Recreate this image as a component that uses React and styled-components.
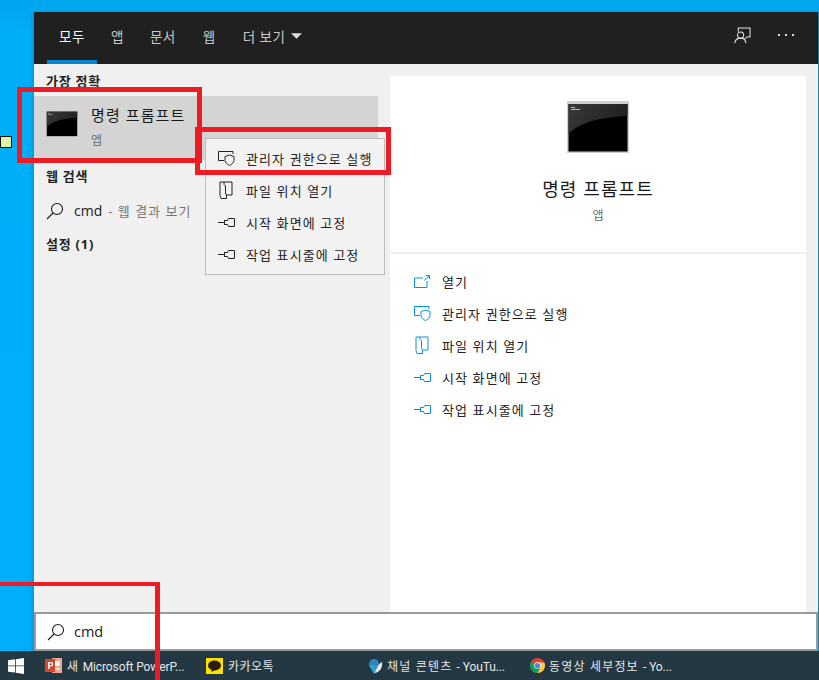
import React from "react";
import styled, { createGlobalStyle } from "styled-components";

const Global = createGlobalStyle`
  html, body { margin: 0; padding: 0; background: #00a9f2; }
  * { box-sizing: border-box; }
  #root { width: 819px; height: 680px; overflow: hidden; }
`;
const FONT = `"Open Sans", "Noto Sans CJK KR", sans-serif`;

const Desktop = styled.div`
  position: relative; width: 819px; height: 680px; overflow: hidden;
  display: flex; flex-direction: column; font-family: ${FONT}; color: #1a1a1a;
  background: linear-gradient(#00a6ee 0, #00adf7 30px, #00aefa 100%);
`;
const Start = styled.div`
  flex: 1; min-height: 0; margin: 12px 0 0 34px; display: flex; flex-direction: column;
  border-right: 1px solid #1d7fa8; box-shadow: -2px 0 3px rgba(0,60,100,.18);
`;
const Header = styled.header`
  height: 52px; flex: none; background: #202020; display: flex; align-items: stretch;
  padding: 0 24px 0 13px; justify-content: space-between;
`;
const Tabs = styled.nav`display: flex;`;
const Tab = styled.div`
  height: 52px; padding: 0 ${p => p.$r ?? 12}px 1px ${p => p.$l ?? 12}px; display: flex; align-items: center; gap: 6px;
  min-width: ${p => p.$w || 0}px; justify-content: center;
  font-size: 13.5px; letter-spacing: .5px; white-space: nowrap;
  color: ${p => p.$active ? "#fff" : "#c9c9c9"};
  border-bottom: 4px solid ${p => p.$active ? "#0a84cf" : "transparent"};
`;
const HeaderTools = styled.div`display: flex; align-items: center; gap: 27px; color: #ddd; padding-bottom: 6px;`;
const More = styled.span`display: flex; gap: 5px;`;
const Dot = styled.i`width: 2px; height: 2px; background: #ddd; display: block;`;
const Body = styled.div`flex: 1; min-height: 0; display: flex; background: #f0f0f0;`;
const Left = styled.section`width: 344px; flex: none; padding-top: 7px;`;
const Heading = styled.h3`
  margin: 0; height: ${p => p.$h || 25}px; padding-left: 12px; font-size: 13px; font-weight: 700; letter-spacing: .75px;
  line-height: 20px; color: #222;
`;
const BestRow = styled.div`
  height: 64px; background: #d4d4d4; padding: 0 12px; display: flex; gap: 13px; align-items: flex-start;
  margin-bottom: 6px;
`;
const BestIcon = styled.div`margin-top: 14px; line-height: 0;`;
const BestText = styled.div`padding-top: 8px; display: flex; flex-direction: column;`;
const BestName = styled.div`font-size: 15px; letter-spacing: 1.1px; line-height: 22px;`;
const Sub = styled.div`font-size: 12px; color: #6b6b6b; line-height: 16px; margin-top: ${p => p.$mt ?? 7}px;`;
const WebRow = styled.div`
  height: 37px; padding: 0 12px; display: flex; align-items: center; gap: 10px; margin-bottom: 5px; font-size: 14px;
`;
const Dim = styled.span`color: #777; font-size: 13px; letter-spacing: 1px; margin-left: -4px;`;
const Right = styled.section`
  flex: 1; margin: 12px 12px 0 12px; background: #fff; display: flex; flex-direction: column;
`;
const Hero = styled.div`
  height: 178px; flex: none; border-bottom: 2px solid #eeeeee; display: flex; flex-direction: column; align-items: center;
  padding-top: 25px;
`;
const HeroName = styled.div`font-size: 18px; letter-spacing: 1.1px; line-height: 26px; margin-top: 23px;`;
const Actions = styled.ul`list-style: none; margin: 0; padding: 11px 0 0 23px;`;
const ActionItem = styled.li`
  height: 32px; display: flex; align-items: center; gap: 11px; font-size: 13px; letter-spacing: 1.1px; color: #222;
`;
const IconBox = styled.span`width: 18px; flex: none; display: flex; justify-content: center; line-height: 0; color: ${p => p.$c};`;
const SearchBox = styled.div`
  height: 39px; flex: none; background: #fff; border: 2px solid #999;
  display: flex; align-items: center; gap: 9px; padding-left: 11px; font-size: 14.5px;
`;
const Taskbar = styled.footer`
  height: 29px; flex: none; background: #233843; display: flex; align-items: center; color: #e6e6e6; font-size: 12px;
  font-family: Roboto, "Noto Sans CJK KR", sans-serif;
`;
const WinBtn = styled.div`width: 45px; flex: none; padding-left: 8px; line-height: 0;`;
const Task = styled.div`
  width: ${p => p.$w}px; flex: none; display: flex; align-items: center; gap: ${p => p.$gap || 5}px; white-space: nowrap; letter-spacing: ${p => p.$ls ?? 1.2}px;
`;
const Latin = styled.span`letter-spacing: ${p => p.$ls ?? -.1}px;`;
const Menu = styled.div`
  position: absolute; left: 205px; top: 138px; width: 180px; height: 137px; background: #f2f2f2;
  border: 1px solid #bcbcbc; padding-top: 3px;
`;
const MenuItem = styled.div`
  height: 32px; display: flex; align-items: center; gap: 11px; padding-left: 11px; font-size: 13px; letter-spacing: 1.1px; color: #222;
`;
const RedBox = styled.div`
  position: absolute; left: ${p => p.$x}px; top: ${p => p.$y}px; width: ${p => p.$w}px; height: ${p => p.$h}px;
  border: 5px solid #ed1c24; pointer-events: none;
`;
const RedOpen = styled.div`
  position: absolute; left: -5px; top: 582px; width: 165px; height: 110px;
  border: 5px solid #ed1c24; border-width: 4px 5px 0 0; pointer-events: none;
`;
const Handle = styled.div`
  position: absolute; left: 0; top: 136px; width: 12px; height: 12px; background: #dcf5ab; border: 1px solid #111;
`;

const CmdIcon = ({ w = 32, h = 27, id }) => (
  <svg width={w} height={h} viewBox="0 0 62 52">
    <defs>
      <linearGradient id={id} x1="0" y1="0" x2="1" y2="0.4">
        <stop offset="0" stopColor="#3a3a3a" /><stop offset="1" stopColor="#202020" />
      </linearGradient>
    </defs>
    <rect width="62" height="52" fill="#cfcfcf" />
    <rect x="1.5" y="3" width="59" height="47.5" fill="#000" />
    <path d="M1.5 3H60.5V15C38 16 14 20 1.5 33Z" fill={`url(#${id})`} />
    <path d="M4 6h4v1H4zM4 8h9v1H4z" fill="#bbb" />
  </svg>
);
const Lens = ({ s = 18 }) => (
  <svg width={s} height={s} viewBox="0 0 18 18" fill="none" stroke="#1a1a1a" strokeWidth="1.1">
    <circle cx="11" cy="7" r="5.5" /><path d="M7 11L1 17" />
  </svg>
);
const AdminIcon = () => (
  <svg width="17" height="15" viewBox="0 0 17 15" fill="none" stroke="currentColor" strokeWidth="1">
    <path d="M6 9.500H.5V.5h14.500v2.500" /><path d="M11.500 4l4.500 1.500v3.700c0 2.300-2 4-4.500 5.300-2.500-1.300-4.500-3-4.500-5.300V5.500z" />
  </svg>
);
const FolderIcon = () => (
  <svg width="14" height="18" viewBox="0 0 14 18" fill="none" stroke="currentColor" strokeWidth="1">
    <path d="M1 1h12v13H8M1 1v13.500l1 3h5.500v-3.500L6.500 12V5L5 3.500V1" />
  </svg>
);
const PinIcon = () => (
  <svg width="17" height="9" viewBox="0 0 17 9" fill="none" stroke="currentColor" strokeWidth="1">
    <path d="M0 4.500h6.500M6.500 2v5M6.500 2.500h3l1-2h6v8h-6l-1-2h-3" />
  </svg>
);
const OpenIcon = () => (
  <svg width="16" height="13" viewBox="0 0 16 13" fill="none" stroke="currentColor" strokeWidth="1">
    <path d="M9 3H.5v9.500h12.500V6M10 5.500L15 1M12 .5h3.500v3.500" />
  </svg>
);
const ShareIcon = () => (
  <svg width="17" height="17" viewBox="0 0 18 18" fill="none" stroke="#e4e4e4" strokeWidth="1.1">
    <path d="M4.500 5V1h12.500v9.500h-3.500l-2 2.500" /><circle cx="7" cy="8.500" r="3.300" /><path d="M.8 17c.5-3 3-5.200 6.200-5.200s5.200 2 5.800 5.200" />
  </svg>
);
const WinLogo = () => (
  <svg width="16" height="16" viewBox="0 0 16 16" fill="#fff">
    <path d="M0 2.300L7 1.300V7.500H0zM7.800 1.200L16 0V7.500H7.800zM0 8.300H7V14.600L0 13.700zM7.800 8.300H16V16L7.800 14.800z" />
  </svg>
);
const PptIcon = () => (
  <svg width="17" height="17" viewBox="0 0 17 17">
    <rect x="7" y="1" width="10" height="15" fill="#f3a58e" /><rect x="9.500" y="4" width="5" height="5" fill="#fff" /><rect x="9.500" y="11" width="5" height="1.500" fill="#fff" />
    <rect x="0" y="2" width="10" height="13" fill="#d24726" />
    <path d="M3 5h3a2 2 0 010 4.500H4.500V12H3zM4.500 6.300v2H6a1 1 0 000-2z" fill="#fff" fillRule="evenodd" />
  </svg>
);
const KakaoIcon = () => (
  <svg width="17" height="16" viewBox="0 0 17 16">
    <rect width="17" height="16" fill="#fae100" /><ellipse cx="8.500" cy="7.500" rx="6.500" ry="5" fill="#2b1d12" /><path d="M6 11l-.5 3L9 12z" fill="#2b1d12" />
  </svg>
);
const BirdIcon = () => (
  <svg width="16" height="16" viewBox="0 0 16 16">
    <circle cx="7" cy="6" r="5" fill="#2b86bd" /><path d="M2 7l5 9 3-3-3-6z" fill="#1fa5dc" />
    <path d="M15 4c1 5-2 10-7 11 1-4 3-9 7-11z" fill="#e8e8e8" />
  </svg>
);
const ChromeIcon = () => (
  <svg width="15" height="15" viewBox="0 0 24 24">
    <circle cx="12" cy="12" r="12" fill="#db4437" />
    <path d="M12 12L1.600 6A12 12 0 0012 24l6-10z" fill="#0f9d58" />
    <path d="M12 7h10.900A12 12 0 0112 24l5-9z" fill="#ffcd40" />
    <circle cx="12" cy="12" r="5.300" fill="#fff" /><circle cx="12" cy="12" r="4.200" fill="#4285f4" />
  </svg>
);
const Caret = () => (
  <svg width="11" height="6" viewBox="0 0 10 5" fill="#ddd"><path d="M0 0h10L5 5z" /></svg>
);

const items = [
  ["관리자 권한으로 실행", AdminIcon],
  ["파일 위치 열기", FolderIcon],
  ["시작 화면에 고정", PinIcon],
  ["작업 표시줄에 고정", PinIcon],
];

export default function App() {
  return (
    <Desktop>
      <Global />
      <Start>
        <Header>
          <Tabs>
            <Tab $active $w={50}>모두</Tab>
            <Tab $l={14} $r={14}>앱</Tab>
            <Tab $l={12} $r={12}>문서</Tab>
            <Tab $l={15} $r={13}>웹</Tab>
            <Tab $l={14} $r={14}>더 보기<Caret /></Tab>
          </Tabs>
          <HeaderTools><ShareIcon /><More><Dot /><Dot /><Dot /></More></HeaderTools>
        </Header>
        <Body>
          <Left>
            <Heading>가장 정확</Heading>
            <BestRow>
              <BestIcon><CmdIcon id="g1" /></BestIcon>
              <BestText><BestName>명령 프롬프트</BestName><Sub>앱</Sub></BestText>
            </BestRow>
            <Heading $h={26}>웹 검색</Heading>
            <WebRow><Lens />cmd <Dim>- 웹 결과 보기</Dim></WebRow>
            <Heading>설정 (1)</Heading>
          </Left>
          <Right>
            <Hero>
              <CmdIcon w={62} h={52} id="g2" />
              <HeroName>명령 프롬프트</HeroName>
              <Sub $mt={6}>앱</Sub>
            </Hero>
            <Actions>
              <ActionItem><IconBox $c="#0a8fe0"><OpenIcon /></IconBox>열기</ActionItem>
              {items.map(([t, I]) => (
                <ActionItem key={t}><IconBox $c="#0a8fe0"><I /></IconBox>{t}</ActionItem>
              ))}
            </Actions>
          </Right>
        </Body>
        <SearchBox><Lens />cmd</SearchBox>
      </Start>
      <Taskbar>
        <WinBtn><WinLogo /></WinBtn>
        <Task $w={161} $ls={.8}><PptIcon /><span>새 <Latin>Microsoft PowerP...</Latin></span></Task>
        <Task $w={161} $ls={.5}><KakaoIcon />카카오톡</Task>
        <Task $w={163} $gap={4}><BirdIcon /><span>채널 콘텐츠 <Latin>- YouTu...</Latin></span></Task>
        <Task $w={150} $gap={4} $ls={1.2}><ChromeIcon /><span>동영상 세부정보 <Latin>- Yo...</Latin></span></Task>
      </Taskbar>
      <Menu>
        {items.map(([t, I]) => (
          <MenuItem key={t}><IconBox $c="#222"><I /></IconBox>{t}</MenuItem>
        ))}
      </Menu>
      <Handle />
      <RedBox $x={17} $y={87} $w={185} $h={76} />
      <RedBox $x={195} $y={127} $w={196} $h={48} />
      <RedOpen />
    </Desktop>
  );
}
